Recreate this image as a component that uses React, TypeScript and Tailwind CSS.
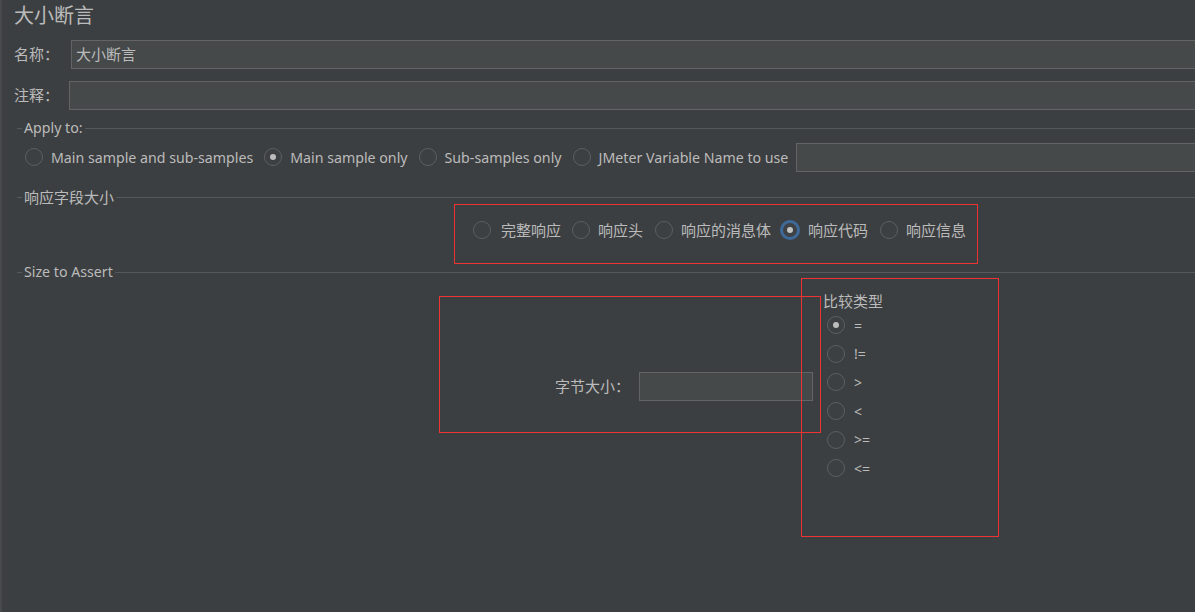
import React from "react";

const FONT = { fontFamily: '"Noto Sans", "Noto Sans CJK SC", sans-serif' };

function Radio({ checked = false, focused = false }: { checked?: boolean; focused?: boolean }) {
  if (focused) {
    return (
      <span className="flex h-[20px] w-[20px] shrink-0 items-center justify-center rounded-full border-[3px] border-[#3d6a99] bg-[#3f4244]">
        <span className="h-[6px] w-[6px] rounded-full bg-[#c4c4c4]" />
      </span>
    );
  }
  return (
    <span className="flex h-[18px] w-[18px] shrink-0 items-center justify-center rounded-full border border-[#5c5f61] bg-[#3d4042]">
      {checked && <span className="h-[6px] w-[6px] rounded-full bg-[#bdbdbd]" />}
    </span>
  );
}

function RadioItem({
  label,
  checked,
  focused,
  className = "",
  textClass = "",
}: {
  label: string;
  checked?: boolean;
  focused?: boolean;
  className?: string;
  textClass?: string;
}) {
  return (
    <div className={"flex items-center " + className}>
      <Radio checked={checked} focused={focused} />
      <span className={"whitespace-nowrap " + textClass}>{label}</span>
    </div>
  );
}

function GroupHeader({ title, className = "", textClass = "" }: { title: string; className?: string; textClass?: string }) {
  return (
    <div className={"flex h-[18px] items-center " + className}>
      <div className="ml-[15px] h-px w-[5px] bg-[#56595b]" />
      <span className={"px-[2px] leading-[18px] whitespace-nowrap " + textClass}>{title}</span>
      <div className="h-px flex-1 bg-[#56595b]" />
    </div>
  );
}

export default function App() {
  return (
    <div className="relative flex h-[612px] w-[1195px] overflow-hidden bg-[#3c3f41] text-[15px] text-[#bbbbbb]" style={FONT}>
      <div className="w-[2px] shrink-0 bg-[#47494b]" />
      <div className="flex min-w-0 flex-1 flex-col">
        {/* Title */}
        <div className="flex h-[32px] items-center pl-[12px] text-[20px]">大小断言</div>

        {/* Name */}
        <div className="mt-[8px] flex h-[29px] items-center pl-[12px]">
          <span className="w-[57px] shrink-0">名称：</span>
          <div className="flex h-full flex-1 items-center border border-r-0 border-[#646464] bg-[#45494a] pl-[4px]">大小断言</div>
        </div>

        {/* Comment */}
        <div className="mt-[12px] flex h-[29px] items-center pl-[12px]">
          <span className="w-[55px] shrink-0">注释：</span>
          <div className="h-full flex-1 border border-r-0 border-[#646464] bg-[#45494a]" />
        </div>

        {/* Apply to */}
        <GroupHeader title="Apply to:" className="mt-[9px]" textClass="text-[14.2px]" />
        <div className="mt-[6px] flex h-[29px] items-center pl-[23px] text-[14.2px]">
          <RadioItem label="Main sample and sub-samples" textClass="ml-[8px]" />
          <RadioItem label="Main sample only" checked className="ml-[11px]" textClass="ml-[8px]" />
          <RadioItem label="Sub-samples only" className="ml-[11px]" textClass="ml-[8px]" />
          <RadioItem label="JMeter Variable Name to use" className="ml-[11px]" textClass="ml-[8px]" />
          <div className="ml-[8px] h-full flex-1 border border-r-0 border-[#646464] bg-[#45494a]" />
        </div>

        {/* Response field */}
        <GroupHeader title="响应字段大小" className="mt-[16px]" />
        <div className="mt-[15px] flex h-[18px] items-center pl-[471px]">
          <RadioItem label="完整响应" textClass="ml-[10px]" />
          <RadioItem label="响应头" className="ml-[11px]" textClass="ml-[8px]" />
          <RadioItem label="响应的消息体" className="ml-[12px]" textClass="ml-[8px]" />
          <RadioItem label="响应代码" focused className="ml-[9px]" textClass="ml-[8px]" />
          <RadioItem label="响应信息" className="ml-[12px]" textClass="ml-[8px]" />
        </div>

        {/* Size to Assert */}
        <GroupHeader title="Size to Assert" className="mt-[24px]" textClass="text-[14.2px]" />
        <div className="flex">
          <div className="flex w-[821px] shrink-0 justify-end pr-[10px] pt-[91px]">
            <div className="flex h-[29px] items-center">
              <span className="mr-[9px]">字节大小：</span>
              <div className="h-full w-[174px] border border-[#646464] bg-[#45494a]" />
            </div>
          </div>
          <div className="flex flex-col pt-[10px]">
            <div className="flex h-[20px] items-center">比较类型</div>
            {["=", "!=", ">", "<", ">=", "<="].map((op, i) => (
              <div key={op} className="flex h-[28.6px] items-center pl-[4px] text-[14px]">
                <Radio checked={i === 0} />
                <span className="ml-[9px]">{op}</span>
              </div>
            ))}
          </div>
        </div>
      </div>

      {/* Red annotation boxes */}
      <div className="pointer-events-none absolute left-[454px] top-[204px] h-[60px] w-[524px] border border-[#ee3333]" />
      <div className="pointer-events-none absolute left-[439px] top-[296px] h-[137px] w-[382px] border border-[#ee3333]" />
      <div className="pointer-events-none absolute left-[801px] top-[278px] h-[259px] w-[198px] border border-[#ee3333]" />
    </div>
  );
}
